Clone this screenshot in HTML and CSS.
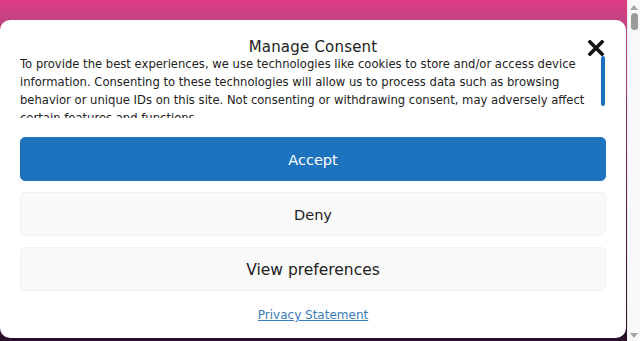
FILE: index.html
```html
<!DOCTYPE html>
<html lang="en">
<head>
    <meta charset="utf-8" />
    <title>Manage Consent</title>
    <link rel="stylesheet" href="styles.css">
</head>
<body>

<div class="page">
    <div class="backdrop">
        <div class="cmplz-cookiebanner">
            <div class="cmplz-header">
                <div class="cmplz-title">Manage Consent</div>
                <button class="cmplz-close" aria-label="Close dialog">
                    <svg width="16" height="16" viewBox="0 0 16 16">
                        <path d="M2 2 L14 14 M14 2 L2 14" stroke="#111" stroke-width="3.6" stroke-linecap="square" />
                    </svg>
                </button>
            </div>
            <div class="cmplz-message">
                <p>To provide the best experiences, we use technologies like cookies to store and/or access device information. Consenting to these technologies will allow us to process data such as browsing behavior or unique IDs on this site. Not consenting or withdrawing consent, may adversely affect certain features and functions.</p>
                <span class="cmplz-scroll"></span>
            </div>
            <div class="cmplz-buttons">
                <button class="cmplz-btn cmplz-accept">Accept</button>
                <button class="cmplz-btn cmplz-deny">Deny</button>
                <button class="cmplz-btn cmplz-view">View preferences</button>
            </div>
            <div class="cmplz-links">
                <a href="#">Privacy Statement</a>
            </div>
        </div>
    </div>
    <!-- page scrollbar -->
    <div class="scrollbar">
        <span class="arrow up"></span>
        <span class="thumb"></span>
        <span class="arrow down"></span>
    </div>
</div>

</body>
</html>
```

FILE: styles.css
```css
    html, body {
        margin: 0;
        padding: 0;
        height: 100%;
        overflow: hidden;
        }
    body {
        font-family: "DejaVu Sans", Verdana, sans-serif;
        color: #222;
        }
    .page {
        display: flex;
        height: 341px;
        }
    .backdrop {
        width: 627px;
        padding-top: 20px;
        box-sizing: border-box;
        background: linear-gradient(to bottom, #dd3c84 0%, #b4467f 10%, #5a1f49 60%, #2a0f2a 100%);
        }

    /* Banner
    ---------------------------------------------------------------- */
    .cmplz-cookiebanner {
        width: 626px;
        height: 318px;
        box-sizing: border-box;
        background: #fff;
        border-radius: 10px;
        padding: 16px 20px 0 20px;
        display: flex;
        flex-direction: column;
        }
    .cmplz-header {
        display: flex;
        align-items: center;
        justify-content: center;
        position: relative;
        height: 19px;
        padding-top: 1px;
        margin-bottom: -1px;
        }
    .cmplz-title {
        font-size: 15px;
        letter-spacing: 0.2px;
        color: #222;
        }
    .cmplz-close {
        position: absolute;
        right: 2px;
        top: 4px;
        border: 0;
        background: none;
        padding: 0;
        width: 16px;
        height: 16px;
        cursor: pointer;
        }
        .cmplz-close svg { display: block; }

    .cmplz-message {
        position: relative;
        height: 63px;
        overflow: hidden;
        font-size: 11.6px;
        line-height: 18px;
        color: #222;
        }
        .cmplz-message p { margin: 0; padding-right: 6px; }
    .cmplz-scroll {
        position: absolute;
        right: 1px;
        top: 1px;
        width: 4px;
        height: 50px;
        background: #1e73be;
        border-radius: 2px;
        }

    .cmplz-buttons {
        display: flex;
        flex-direction: column;
        gap: 11px;
        margin-top: 19px;
        }
    .cmplz-btn {
        height: 44px;
        padding-top: 2px;
        border-radius: 5px;
        font-family: "DejaVu Sans", Verdana, sans-serif;
        font-size: 14.5px;
        cursor: pointer;
        }
    .cmplz-accept {
        background: #1e73be;
        border: 1px solid #1e73be;
        color: #fff;
        }
    .cmplz-deny, .cmplz-view {
        background: #f9f9f9;
        border: 1px solid #f2f2f2;
        color: #222;
        }
    .cmplz-view { font-size: 15.5px; }

    .cmplz-links {
        text-align: center;
        margin-top: 17px;
        font-size: 12px;
        }
        .cmplz-links a {
            color: #3a7cb5;
            text-decoration: underline;
            }

    /* Fake page scrollbar
    ---------------------------------------------------------------- */
    .scrollbar {
        width: 13px;
        background: #f8f8f8;
        border-left: 1px solid #eee;
        box-sizing: border-box;
        display: flex;
        flex-direction: column;
        align-items: center;
        }
    .scrollbar .arrow {
        width: 0;
        height: 0;
        border-left: 4px solid transparent;
        border-right: 4px solid transparent;
        }
    .scrollbar .up {
        margin-top: 5px;
        border-bottom: 5px solid #a3a3a3;
        }
    .scrollbar .thumb {
        width: 7px;
        height: 17px;
        margin-top: 3px;
        background: #9a9a9a;
        border-radius: 4px;
        }
    .scrollbar .down {
        margin-top: auto;
        margin-bottom: 3px;
        border-top: 5px solid #a3a3a3;
        }
```
